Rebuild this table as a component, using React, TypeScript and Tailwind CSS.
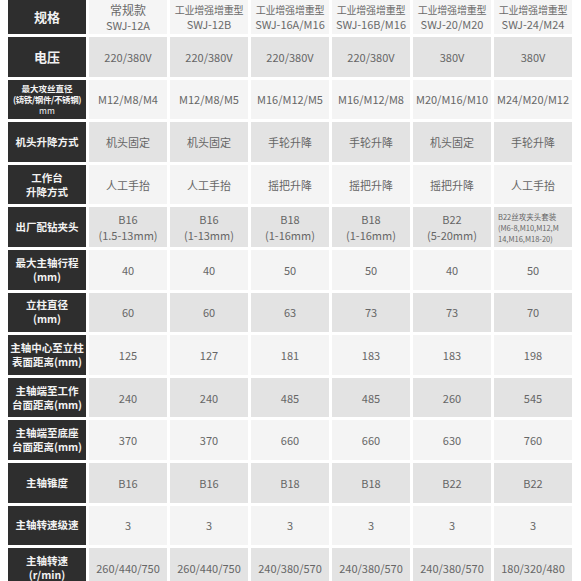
import type { ReactNode } from "react";

type Row = {
  label: ReactNode;
  values: ReactNode[];
  shade: "light" | "dark";
};

const models = [
  { kind: "常规款", code: "SWJ-12A", big: true },
  { kind: "工业增强增重型", code: "SWJ-12B" },
  { kind: "工业增强增重型", code: "SWJ-16A/M16" },
  { kind: "工业增强增重型", code: "SWJ-16B/M16" },
  { kind: "工业增强增重型", code: "SWJ-20/M20" },
  { kind: "工业增强增重型", code: "SWJ-24/M24" },
];

const two = (a: string, b: string) => (
  <>
    <span>{a}</span>
    <span>{b}</span>
  </>
);

const rows: Row[] = [
  {
    label: <span className="text-[13px]">电压</span>,
    values: ["220/380V", "220/380V", "220/380V", "220/380V", "380V", "380V"],
    shade: "dark",
  },
  {
    label: (
      <span className="flex flex-col text-[8.5px] leading-[11px]">
        <span>最大攻丝直径</span>
        <span className="tracking-[-0.4px]">(铸铁/钢件/不锈钢)</span>
        <span className="font-normal">mm</span>
      </span>
    ),
    values: ["M12/M8/M4", "M12/M8/M5", "M16/M12/M5", "M16/M12/M8", "M20/M16/M10", "M24/M20/M12"],
    shade: "light",
  },
  {
    label: "机头升降方式",
    values: ["机头固定", "机头固定", "手轮升降", "手轮升降", "机头固定", "手轮升降"],
    shade: "dark",
  },
  {
    label: two("工作台", "升降方式"),
    values: ["人工手抬", "人工手抬", "摇把升降", "摇把升降", "摇把升降", "人工手抬"],
    shade: "light",
  },
  {
    label: "出厂配钻夹头",
    values: [
      two("B16", "(1.5-13mm)"),
      two("B16", "(1-13mm)"),
      two("B18", "(1-16mm)"),
      two("B18", "(1-16mm)"),
      two("B22", "(5-20mm)"),
      <span className="flex flex-col items-start self-stretch px-[4px] text-left text-[7.5px] leading-[11px]">
        <span>B22丝攻夹头套装</span>
        <span>(M6-8,M10,M12,M</span>
        <span>14,M16,M18-20)</span>
      </span>,
    ],
    shade: "dark",
  },
  {
    label: two("最大主轴行程", "(mm)"),
    values: ["40", "40", "50", "50", "40", "50"],
    shade: "light",
  },
  {
    label: two("立柱直径", "(mm)"),
    values: ["60", "60", "63", "73", "73", "70"],
    shade: "dark",
  },
  {
    label: two("主轴中心至立柱", "表面距离(mm)"),
    values: ["125", "127", "181", "183", "183", "198"],
    shade: "light",
  },
  {
    label: two("主轴端至工作", "台面距离(mm)"),
    values: ["240", "240", "485", "485", "260", "545"],
    shade: "dark",
  },
  {
    label: two("主轴端至底座", "台面距离(mm)"),
    values: ["370", "370", "660", "660", "630", "760"],
    shade: "light",
  },
  {
    label: "主轴锥度",
    values: ["B16", "B16", "B18", "B18", "B22", "B22"],
    shade: "dark",
  },
  {
    label: "主轴转速级速",
    values: ["3", "3", "3", "3", "3", "3"],
    shade: "light",
  },
  {
    label: two("主轴转速", "(r/min)"),
    values: ["260/440/750", "260/440/750", "240/380/570", "240/380/570", "240/380/570", "180/320/480"],
    shade: "dark",
  },
];

function HeadCell({ children, className = "" }: { children: ReactNode; className?: string }) {
  return (
    <div
      className={`flex flex-col items-center justify-center bg-[#2e2e2e] text-center text-[10.5px] font-bold leading-[14px] text-[#f2f2f2] ${className}`}
    >
      {children}
    </div>
  );
}

export default function App() {
  return (
    <div
      className="min-h-screen bg-white pl-[8px] pr-[9px]"
      style={{ fontFamily: '"Noto Sans CJK SC", "Noto Sans", sans-serif' }}
    >
      <div className="flex flex-col gap-[3px]">
        {/* model header row */}
        <div className="grid h-[34px] grid-cols-7 gap-x-[3px]">
          <HeadCell className="text-[13px]">规格</HeadCell>
          {models.map((m, i) => (
            <div
              key={i}
              className="flex flex-col items-center justify-center bg-[#f5f5f5] text-[#6a6a6a]"
            >
              <span
                className={
                  m.big ? "text-[12px] leading-[17px]" : "text-[10px] leading-[15px] tracking-[-0.2px]"
                }
              >
                {m.kind}
              </span>
              <span className="text-[11px] leading-[15px]">{m.code}</span>
            </div>
          ))}
        </div>

        {rows.map((row, r) => (
          <div key={r} className="grid h-[39.6px] grid-cols-7 gap-x-[3px]">
            <HeadCell>{row.label}</HeadCell>
            {row.values.map((v, i) => (
              <div
                key={i}
                className={`flex flex-col items-center justify-center text-center text-[11px] leading-[16px] text-[#666] ${
                  row.shade === "dark" ? "bg-[#e3e3e3]" : "bg-[#f4f4f4]"
                }`}
              >
                {v}
              </div>
            ))}
          </div>
        ))}
      </div>
    </div>
  );
}
